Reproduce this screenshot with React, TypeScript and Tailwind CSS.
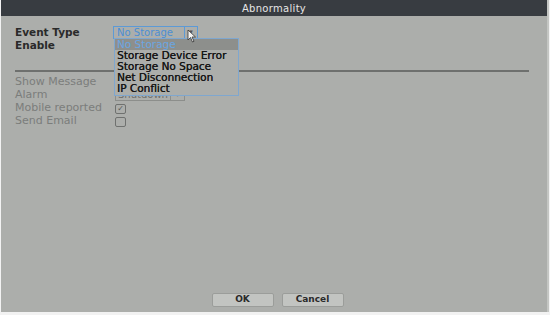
import React from "react";

const rows = ["Show Message", "Alarm", "Mobile reported", "Send Email"];
const options = ["No Storage", "Storage Device Error", "Storage No Space", "Net Disconnection", "IP Conflict"];

export default function App() {
  return (
    <div className="w-[550px] h-[315px] bg-[#f2f2f2] overflow-hidden" style={{ fontFamily: '"DejaVu Sans", Verdana, sans-serif' }}>
      <div className="w-[548px] h-[312px] ml-[1px] flex flex-col bg-[#acaeab] border-r-2 border-[#c4c6c3]">
        {/* title bar */}
        <div className="h-[16px] bg-[#383c41] flex items-center justify-center text-[10px] text-[#e6e6e6] tracking-[0.3px]">
          Abnormality
        </div>

        <div className="flex-1 flex flex-col px-[14px] pt-[10px] relative">
          <div className="flex items-center h-[13px] text-[10.5px] font-semibold text-[#2a2a2a]">
            <span className="w-[98px]">Event Type</span>
            <div className="flex h-[13px]">
              <div className="w-[72px] border border-[#5d9ad6] text-[#4c8fd3] font-normal text-[10px] leading-[11px] px-[3px]">No Storage</div>
              <div className="w-[13px] border border-[#5d9ad6] border-l-0 flex items-center justify-center text-[7px] text-[#555]">▾</div>
            </div>
          </div>
          <div className="flex items-center h-[13px] text-[10.5px] font-semibold text-[#2a2a2a]">
            <span>Enable</span>
          </div>

          <div className="mt-[18px] w-[514px] h-[2px] bg-[#6e706e]" />

          <div className="mt-[4px] flex flex-col text-[11px] text-[#7b7d7b]">
            {rows.map((r, i) => (
              <div key={r} className="flex items-center h-[13px]">
                <span className="w-[100px]">{r}</span>
                {i === 1 && (
                  <div className="flex h-[12px] -mt-[2px]">
                    <div className="w-[56px] border border-[#8c8e8b] text-[10px] leading-[10px] px-[2px] text-[#6d6f6d]">Shutdown</div>
                    <div className="w-[14px] border border-[#8c8e8b] border-l-0 text-[7px] leading-[10px] text-center">▾</div>
                  </div>
                )}
                {i === 2 && (
                  <div className="w-[11px] h-[10px] border border-[#6f716f] rounded-[2px] flex items-center justify-center text-[8px] leading-none text-[#555755]">✓</div>
                )}
                {i === 3 && <div className="w-[11px] h-[10px] border border-[#6f716f] rounded-[2px]" />}
              </div>
            ))}
          </div>

          {/* dropdown list */}
          <div className="absolute left-[113px] top-[22px] w-[125px] bg-[#acaeab] border border-[#7fa7cf] flex flex-col text-[10.5px] leading-[11px] pb-[1px]">
            {options.map((o, i) => (
              <div
                key={o}
                className={i === 0 ? "bg-[#8d8f8c] text-[#6aa6e2] px-[2px] h-[11px]" : "text-[#161616] px-[2px] h-[11px] [text-shadow:0.3px_0_0_#161616]"}
              >
                {o}
              </div>
            ))}
          </div>

          {/* cursor */}
          <svg className="absolute left-[186px] top-[13px]" width="10" height="14" viewBox="0 0 10 14">
            <path d="M1 1 L1 11 L3.5 8.5 L5.5 13 L7 12.3 L5 8 L8.5 8 Z" fill="#f4f4f4" stroke="#333" strokeWidth="0.8" />
          </svg>

          <div className="flex-1" />
          <div className="flex justify-center gap-[8px] pb-[5px] pl-[7px] text-[9px] font-semibold text-[#2a2a2a]">
            <div className="w-[62px] h-[14px] bg-[#c2c4c1] border border-[#9b9d9a] rounded-[2px] flex items-center justify-center">OK</div>
            <div className="w-[62px] h-[14px] bg-[#c2c4c1] border border-[#9b9d9a] rounded-[2px] flex items-center justify-center">Cancel</div>
          </div>
        </div>
      </div>
    </div>
  );
}
